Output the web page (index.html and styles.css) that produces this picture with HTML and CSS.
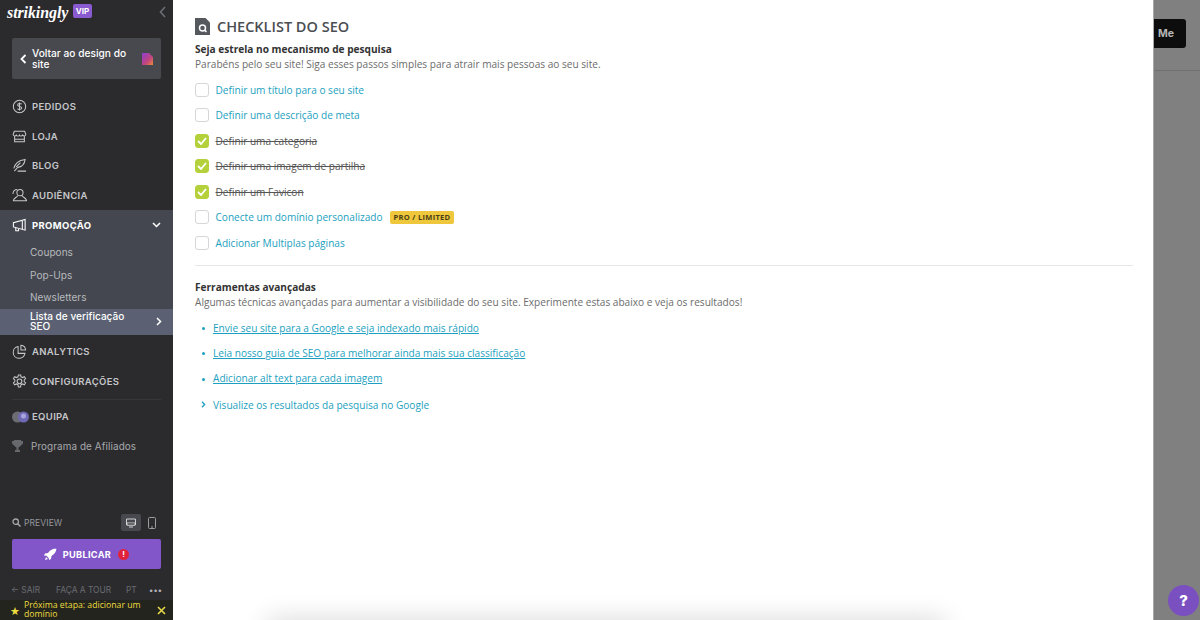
FILE: index.html
```html
<!DOCTYPE html>
<html lang="pt">
<head>
<meta charset="utf-8">
<title>Checklist do SEO</title>
<link rel="stylesheet" href="styles.css">
</head>
<body>
<div class="app">
  <aside class="sidebar">
    <div class="brand">
      <span class="logo">strikingly</span><span class="vip">VIP</span>
      <svg class="collapse" width="7" height="12" viewBox="0 0 7 12"><path d="M6 1 1.5 6 6 11" fill="none" stroke="#6c6e73" stroke-width="1.6"/></svg>
    </div>
    <div class="back">
      <svg width="7" height="10" viewBox="0 0 7 10"><path d="M5.5 1 1.5 5l4 4" fill="none" stroke="#fff" stroke-width="1.8"/></svg>
      <span class="back-text">Voltar ao design do site</span>
      <svg class="back-doc" width="11" height="12" viewBox="0 0 11 12"><defs><linearGradient id="g" x1="0" y1="0" x2="1" y2="1"><stop offset="0" stop-color="#8d3fd0"/><stop offset=".6" stop-color="#c2457f"/><stop offset="1" stop-color="#ef8a3a"/></linearGradient></defs><path d="M0 0h7l4 4v8H0z" fill="url(#g)"/></svg>
    </div>
    <nav class="nav">
      <a class="item"><svg class="ico" viewBox="0 0 16 16"><circle cx="8" cy="8" r="6.6"/><path d="M10.3 5.6C9.6 4.6 6 4.5 6 6.4c0 2 4.4 1.2 4.4 3.2 0 1.9-3.8 1.8-4.6.8M8 3.8v8.4"/></svg>PEDIDOS</a>
      <a class="item"><svg class="ico" viewBox="0 0 16 16"><path d="M2.5 2.5h11l1.3 3.4c-.3 2-2.6 2-3.4.6-.7 1.4-3 1.4-3.4 0-.5 1.4-2.8 1.4-3.4 0-.8 1.4-3.1 1.4-3.4-.6zM2.8 8v5.5h10.4V8M2.8 11h10.4"/></svg>LOJA</a>
      <a class="item"><svg class="ico" viewBox="0 0 16 16"><path d="M2 11C3 6 7 2.500 14 1.500 13.500 6 11 9.500 6 10l-3.500 4M6 14h9"/><path d="M4.500 9.500 9 5"/></svg>BLOG</a>
      <a class="item"><svg class="ico" viewBox="0 0 16 16"><circle cx="8.500" cy="5" r="3.300"/><path d="M6 8c0 2-4.500 2.500-4.500 5.500h14C15.500 10.500 11 10 11 8M1 6.500C1 3.500 3 1.500 5.500 1.500"/></svg>AUDIÊNCIA</a>
      <div class="group">
        <a class="item item-open"><svg class="ico" viewBox="0 0 16 16"><path d="M1.500 5v4.500L14 13V1.500zM4 10v3.500h3V11M11 2.500v9.500"/></svg>PROMOÇÃO<svg class="chev" width="9" height="6" viewBox="0 0 9 6"><path d="M1 1l3.500 3.500L8 1" fill="none" stroke="#fff" stroke-width="1.500"/></svg></a>
        <a class="sub sub-first">Coupons</a>
        <a class="sub">Pop-Ups</a>
        <a class="sub">Newsletters</a>
        <a class="sub sub-active"><span>Lista de verificação SEO</span><svg width="6" height="9" viewBox="0 0 6 9"><path d="M1 1l3.500 3.500L1 8" fill="none" stroke="#fff" stroke-width="1.500"/></svg></a>
      </div>
      <a class="item item-after"><svg class="ico" viewBox="0 0 16 16"><path d="M6.500 2.700a6.300 6.300 0 1 0 7.300 7.300H6.500zM9.500 1.300a5.500 5.500 0 0 1 5 5.200h-5z"/></svg>ANALYTICS</a>
      <a class="item"><svg class="ico" viewBox="0 0 16 16"><path d="M6.800 1h2.400l.4 2 1.700.8 1.900-.9 1.300 2-1.500 1.400v1.800l1.500 1.400-1.300 2-1.900-.9-1.700.8-.4 2.500H6.800l-.4-2.500-1.700-.8-1.900.9-1.300-2 1.500-1.400V6.300L1.500 4.900l1.300-2 1.900.9 1.700-.8z"/><circle cx="8" cy="7.800" r="2.500"/></svg>CONFIGURAÇÕES</a>
      <div class="divider"></div>
      <a class="item"><svg class="team" width="17" height="12" viewBox="0 0 17 12"><circle cx="5.500" cy="6" r="5.500" fill="#6b6d72"/><circle cx="11.500" cy="6" r="5.500" fill="#6f68b5"/><circle cx="11.500" cy="5" r="2.500" fill="#a9a4dd"/></svg>EQUIPA</a>
      <a class="item item-plain"><svg class="ico-fill" width="11" height="12" viewBox="0 0 11 12"><path d="M2 0h7v1h2v2.500L8.500 6 6.500 7.500V10H8v2H3v-2h1.500V7.500L2.500 6 0 3.500V1h2z" fill="#66686c"/></svg>Programa de Afiliados</a>
    </nav>
    <div class="preview">
      <svg width="9" height="9" viewBox="0 0 9 9"><circle cx="3.700" cy="3.700" r="2.700" fill="none" stroke="#a4a6aa" stroke-width="1.300"/><path d="M5.700 5.700 8.500 8.500" stroke="#a4a6aa" stroke-width="1.500"/></svg>
      <span class="preview-label">PREVIEW</span>
      <span class="device device-on"><svg width="10" height="10" viewBox="0 0 10 10"><path d="M.5 1h9v6h-9z" fill="none" stroke="#d0d1d4"/><path d="M1 5h8v2H1zM3 9h4" stroke="#d0d1d4"/></svg></span>
      <span class="device"><svg width="8" height="12" viewBox="0 0 8 12"><rect x=".5" y=".5" width="7" height="11" rx="1" fill="none" stroke="#9b9da1"/><path d="M3 10h2" stroke="#9b9da1"/></svg></span>
    </div>
    <button class="publish">
      <svg width="13" height="12" viewBox="0 0 13 12"><path d="M12.500.5C8.500.5 6 2 4 5L1 5.500 0 7.500l2.500.3 2.200 2.200.3 2 2-1 .5-3c3.500-2 4.800-5 5-8zM2 9l-1 3 3-1z" fill="#fff"/></svg>
      <span>PUBLICAR</span>
      <span class="alert">!</span>
    </button>
    <div class="foot">
      <span class="foot-exit">← SAIR</span><span>FAÇA A TOUR</span><span>PT</span><span class="dots">•••</span>
    </div>
    <div class="next">
      <span class="star">★</span>
      <span class="next-text">Próxima etapa: adicionar um domínio</span>
      <svg width="9" height="9" viewBox="0 0 9 9"><path d="M1 1l7 7M8 1 1 8" stroke="#e6d94a" stroke-width="1.600"/></svg>
    </div>
  </aside>

  <main class="panel">
    <h1 class="title">
      <svg width="15" height="17" viewBox="0 0 15 17"><path d="M0 0h10.500L15 4.500V17H0z" fill="#55585c"/><circle cx="7.500" cy="10" r="3" fill="none" stroke="#fff" stroke-width="1.500"/><path d="M9.700 12.200 11.500 14" stroke="#fff" stroke-width="1.500"/></svg>
      CHECKLIST DO SEO
    </h1>
    <h2 class="lead">Seja estrela no mecanismo de pesquisa</h2>
    <p class="desc">Parabéns pelo seu site! Siga esses passos simples para atrair mais pessoas ao seu site.</p>
    <ul class="checks">
      <li class="check"><span class="box"></span><a>Definir um título para o seu site</a></li>
      <li class="check"><span class="box"></span><a>Definir uma descrição de meta</a></li>
      <li class="check done"><span class="box"><svg width="10" height="8" viewBox="0 0 10 8"><path d="M1 4l3 3 5-6" fill="none" stroke="#fff" stroke-width="1.800"/></svg></span><a>Definir uma categoria</a></li>
      <li class="check done"><span class="box"><svg width="10" height="8" viewBox="0 0 10 8"><path d="M1 4l3 3 5-6" fill="none" stroke="#fff" stroke-width="1.800"/></svg></span><a>Definir uma imagem de partilha</a></li>
      <li class="check done"><span class="box"><svg width="10" height="8" viewBox="0 0 10 8"><path d="M1 4l3 3 5-6" fill="none" stroke="#fff" stroke-width="1.800"/></svg></span><a>Definir um Favicon</a></li>
      <li class="check"><span class="box"></span><a>Conecte um domínio personalizado</a><span class="badge">PRO / LIMITED</span></li>
      <li class="check"><span class="box"></span><a>Adicionar Multiplas páginas</a></li>
    </ul>
    <hr class="rule">
    <h2 class="lead">Ferramentas avançadas</h2>
    <p class="desc">Algumas técnicas avançadas para aumentar a visibilidade do seu site. Experimente estas abaixo e veja os resultados!</p>
    <ul class="tools">
      <li class="tool"><a>Envie seu site para a Google e seja indexado mais rápido</a></li>
      <li class="tool"><a>Leia nosso guia de SEO para melhorar ainda mais sua classificação</a></li>
      <li class="tool"><a>Adicionar alt text para cada imagem</a></li>
    </ul>
    <div class="google">
      <svg width="5" height="7" viewBox="0 0 5 7"><path d="M1 .8l2.700 2.700L1 6.200" fill="none" stroke="#1c9fc0" stroke-width="1.300"/></svg>
      <a>Visualize os resultados da pesquisa no Google</a>
    </div>
    <div class="under-shadow"></div>
  </main>

  <div class="backdrop">
    <div class="top-bar"><span class="me">Me</span></div>
    <span class="help">?</span>
  </div>
</div>
</body>
</html>
```
FILE: styles.css
```css
* { box-sizing: border-box; }
html, body { margin: 0; padding: 0; height: 620px; overflow: hidden; }
body { font-family: "Open Sans", sans-serif; background: #808080; }
a { text-decoration: none; color: inherit; }
ul { list-style: none; margin: 0; padding: 0; }

.app { display: flex; width: 1200px; height: 620px; overflow: hidden; }

/* Sidebar */
.sidebar { width: 173px; flex: none; height: 620px; display: flex; flex-direction: column; background: #2b2b2e; font-family: Inter, sans-serif; color: #c9cacd; }
.brand { height: 38px; display: flex; align-items: flex-start; padding: 3px 7px 0; }
.logo { font-family: "Liberation Serif", serif; font-style: italic; font-weight: 700; font-size: 16px; line-height: 19px; color: #fff; width: 60px; letter-spacing: -.1px; }
.vip { margin: 1px 0 0 6px; width: 19px; height: 14px; background: #8a5bd0; border-radius: 2px; font-size: 8px; font-weight: 700; line-height: 14px; color: #fff; text-align: center; }
.collapse { margin: 3px 0 0 auto; }
.back { margin: 0 12px; height: 41px; background: #47494f; border-radius: 2px; display: flex; align-items: center; padding: 0 8px 0 8px; color: #fff; }
.back-text { font-size: 10.200px; font-weight: 500; line-height: 10.500px; margin-left: 5px; width: 102px; }
.back-doc { margin-left: auto; }

.nav { margin-top: 13px; display: flex; flex-direction: column; }
.item { height: 29.600px; display: flex; align-items: center; padding: 0 12px; font-size: 9.500px; font-weight: 600; letter-spacing: .35px; color: #c6c7ca; flex: none; }
.ico { width: 15px; height: 15px; margin-right: 5px; fill: none; stroke: #c6c7ca; stroke-width: 1.100; flex: none; }
.team { margin-right: 3px; flex: none; }
.ico-fill { margin: 0 8px 0 0; flex: none; }
.item-plain { font-weight: 400; font-size: 9.900px; letter-spacing: .1px; color: #a8a9ac; }
.group { background: #44474f; margin-top: 0; height: 125px; display: flex; flex-direction: column; }
.item-open { color: #fff; font-weight: 700; flex: none; }
.item-open .ico { stroke: #fff; }
.chev { margin-left: auto; margin-right: 0; }
.sub { height: 22.400px; display: flex; align-items: center; padding-left: 30px; font-size: 10.100px; color: #b7b9bd; flex: none; }
.sub-first { margin-top: 1px; }
.sub-active { height: 26px; margin-top: 1px; padding-bottom: 2px; background: #5b6172; color: #fff; font-weight: 500; line-height: 10px; padding-right: 11px; justify-content: space-between; }
.sub-active span { width: 108px; }
.item-after { margin-top: 1px; margin-bottom: .8px; }
.divider { height: 1px; background: #36373a; margin: 3px 12px 1.500px; }

.preview { margin-top: auto; height: 17px; display: flex; align-items: center; padding: 0 11px 0 12px; color: #95979b; font-size: 8.500px; flex: none; }
.preview-label { margin-left: 3px; letter-spacing: .1px; }
.device { width: 20px; height: 17px; display: flex; align-items: center; justify-content: center; border-radius: 2px; }
.device-on { margin-left: auto; background: #47494f; }
.device + .device { margin-left: 1px; }
.publish { margin: 8px 12px 0; height: 30px; flex: none; background: #8256c9; border: 0; border-radius: 2px; display: flex; align-items: center; justify-content: center; color: #fff; font-family: Inter, sans-serif; font-size: 9.200px; font-weight: 700; letter-spacing: .3px; padding: 0; }
.publish span:first-of-type { margin-left: 6px; }
.alert { width: 11px; height: 11px; margin-left: 7px; border-radius: 50%; background: #e0233d; color: #fff; font-size: 8px; line-height: 11px; text-align: center; }
.foot { height: 21px; margin-top: 10px; display: flex; align-items: center; padding: 0 11px; font-size: 8.400px; color: #6a6c70; flex: none; }
.foot-exit { width: 45px; }
.foot span:nth-child(2) { width: 70px; }
.foot span:nth-child(3) { width: 18px; }
.dots { color: #b0b1b4; margin-left: auto; letter-spacing: -.3px; }
.next { height: 20px; flex: none; background: #24241f; display: flex; align-items: center; padding: 0 7px 0 10px; color: #ecdc3e; font-family: "Open Sans", sans-serif; font-size: 8.700px; line-height: 9px; }
.star { font-size: 11px; margin-right: 4px; line-height: 11px; }
.next-text { width: 125px; }
.next svg { margin-left: auto; }

/* Panel */
.panel { width: 980px; flex: none; height: 620px; background: #fff; padding: 0 20px 0 22px; position: relative; color: #333; overflow: hidden; }
.title { margin: 0; height: 53px; display: flex; align-items: center; font-size: 14.500px; font-weight: 600; color: #4b4e52; gap: 7px; }
.lead { margin: -12px 0 0; font-size: 10.100px; line-height: 16px; font-weight: 700; color: #333; }
.desc { margin: 0; font-size: 10.100px; line-height: 14px; color: #6c6c6c; }
.checks { margin-top: 6px; }
.check { height: 25.500px; display: flex; align-items: center; font-size: 10.100px; }
.check a { color: #1c9fc0; }
.box { width: 14px; height: 14px; border: 1px solid #d6d6d6; border-radius: 3px; margin-right: 6.500px; display: flex; align-items: center; justify-content: center; background: #fff; flex: none; }
.done .box { background: #b4d13c; border-color: #b4d13c; }
.done a { color: #555; text-decoration: line-through; }
.badge { margin-left: 7px; height: 13px; padding: 0 4px; background: #efc73d; border-radius: 2px; color: #4a3f12; font-size: 7.500px; font-weight: 700; line-height: 13px; letter-spacing: .3px; }
.rule { margin: 9px 0 0; border: 0; border-top: 1px solid #e6e6e6; height: 1px; }
.panel .rule + .lead { margin-top: 13px; }
.tools { margin-top: 6.500px; }
.tool { height: 25.300px; display: flex; align-items: center; padding-left: 18px; font-size: 10.100px; position: relative; color: #1c9fc0; }
.tool::before { content: ""; position: absolute; left: 7px; top: 12px; width: 3px; height: 3px; border-radius: 50%; background: #1c9fc0; }
.tool a { text-decoration: underline; }
.google { height: 25px; margin-top: 1.500px; display: flex; align-items: center; font-size: 10.100px; color: #1c9fc0; gap: 7px; padding-left: 6px; }
.under-shadow { position: absolute; left: 98px; width: 670px; top: 622px; height: 20px; box-shadow: 0 0 26px 4px rgba(0, 0, 0, .14); }

/* Backdrop */
.backdrop { flex: 1; position: relative; height: 620px; background: #808080; border-left: 1px solid #a8a8a8; }
.top-bar { height: 71px; border-bottom: 1px solid #707070; padding-top: 19px; }
.me { display: block; width: 32px; height: 29px; background: #0d0d0d; border-radius: 0 3px 3px 0; color: #b5b5b5; font-family: Inter, sans-serif; font-size: 10.500px; font-weight: 700; line-height: 29px; padding-left: 4px; }
.help { position: absolute; left: 14px; top: 585px; width: 31px; height: 31px; border-radius: 50%; background: #7a4fbf; color: #fff; font-family: Inter, sans-serif; font-weight: 800; font-size: 15px; line-height: 31px; text-align: center; }
```
